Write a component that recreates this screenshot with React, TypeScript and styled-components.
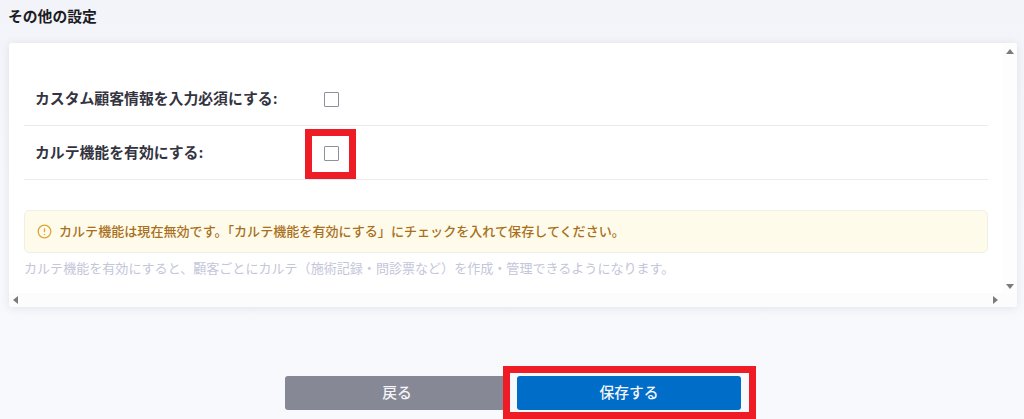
import React from "react";
import styled, { createGlobalStyle } from "styled-components";

const Global = createGlobalStyle`
  html, body { margin: 0; padding: 0; }
  body {
    width: 1024px; height: 419px; overflow: hidden;
    font-family: Inter, "Noto Sans CJK JP", sans-serif;
    background: linear-gradient(180deg, #f3f4f9 0%, #f7f8fc 45%, #f8f9fd 100%);
  }
`;
const Page = styled.div`
  position: relative; width: 1024px; height: 419px; overflow: hidden;
  display: flex; flex-direction: column;
`;
const Title = styled.h2`
  margin: 0; padding: 8px 8px 0; height: 43px; box-sizing: border-box;
  font-size: 14.8px; line-height: 18px; font-weight: 700; color: #1c1c24;
`;
const Card = styled.section`
  margin-left: 9px; width: 1008px; height: 264px; background: #fff; border-radius: 3px;
  box-shadow: 0 1px 10px rgba(70, 75, 110, 0.12);
  display: grid; grid-template-columns: 1fr 14px; grid-template-rows: 1fr 14px; overflow: hidden;
`;
const Content = styled.div`
  padding: 29px 15px 0; min-width: 0;
`;
const Row = styled.div`
  height: 54px; box-sizing: border-box; display: flex; align-items: center;
  border-bottom: 1px solid #ebecf2; padding: 0 0 0 11px;
`;
const Label = styled.label`
  width: 289px; font-size: 14.85px; font-weight: 700; color: #33343f; white-space: nowrap;
  margin-top: -2px;
`;
const Check = styled.span`
  width: 15px; height: 15px; margin-top: 2px; box-sizing: border-box;
  border: 1px solid #8d90a0; border-radius: 1px; background: #fff;
`;
const Alert = styled.div`
  margin-top: 30px; height: 43px; box-sizing: border-box; display: flex; align-items: center; gap: 7px;
  padding: 0 12px; background: #fffbeb; border: 1px solid #eef0e8; border-radius: 5px;
`;
const AlertText = styled.span`
  margin-top: -3px;
  color: #a8701c; font-size: 13.07px; font-weight: 500; white-space: nowrap;
`;
const Hint = styled.p`
  margin: 6px 0 0; font-size: 13.05px; line-height: 18px; color: #c4c6d9; white-space: nowrap;
`;
const VBar = styled.div`
  background: #fdfdfd; display: flex; flex-direction: column; justify-content: space-between; align-items: center;
  padding: 6px 0 4px 0;
`;
const HBar = styled.div`
  background: #fcfcfc; display: flex; justify-content: space-between; align-items: center; padding: 0 5px 0 4px;
`;
const Corner = styled.div`background: #fcfcfc;`;
const Arrow = styled.span<{ $dir: "up" | "down" | "left" | "right" }>`
  width: 0; height: 0; border-style: solid;
  ${({ $dir }) =>
    $dir === "up" ? "border-width: 0 4px 5px; border-color: transparent transparent #7b7b7b;" :
    $dir === "down" ? "border-width: 5px 4px 0; border-color: #7b7b7b transparent transparent;" :
    $dir === "left" ? "border-width: 4px 5px 4px 0; border-color: transparent #7b7b7b transparent transparent;" :
    "border-width: 4px 0 4px 5px; border-color: transparent transparent transparent #7b7b7b;"}
`;
const Actions = styled.div`
  margin-top: 69px; display: flex; justify-content: center; gap: 8px; margin-left: 2px;
`;
const Button = styled.button<{ $primary?: boolean }>`
  width: 224px; height: 34px; border: 0; border-radius: 3px; padding: 0 0 3px;
  background: ${({ $primary }) => ($primary ? "#006dc8" : "#868895")};
  color: #f4f5f8; font: 500 14.8px Inter, "Noto Sans CJK JP", sans-serif;
`;
const Frame = styled.div<{ $x: number; $y: number; $w: number; $h: number }>`
  position: absolute; box-sizing: border-box; border: 7px solid #ee1c25;
  left: ${p => p.$x}px; top: ${p => p.$y}px; width: ${p => p.$w}px; height: ${p => p.$h}px;
`;

export default function App() {
  return (
    <Page>
      <Global />
      <Title>その他の設定</Title>
      <Card>
        <Content>
          <Row><Label>カスタム顧客情報を入力必須にする:</Label><Check /></Row>
          <Row><Label>カルテ機能を有効にする:</Label><Check /></Row>
          <Alert>
            <svg width="15" height="15" viewBox="0 0 15 15" fill="none" stroke="#dca53a" strokeWidth="1.3">
              <circle cx="7.5" cy="7.5" r="6.3" />
              <path d="M7.5 4.2v4M7.5 10v1" />
            </svg>
            <AlertText>カルテ機能は現在無効です。「カルテ機能を有効にする」にチェックを入れて保存してください。</AlertText>
          </Alert>
          <Hint>カルテ機能を有効にすると、顧客ごとにカルテ（施術記録・問診票など）を作成・管理できるようになります。</Hint>
        </Content>
        <VBar><Arrow $dir="up" /><Arrow $dir="down" /></VBar>
        <HBar><Arrow $dir="left" /><Arrow $dir="right" /></HBar>
        <Corner />
      </Card>
      <Actions>
        <Button>戻る</Button>
        <Button $primary>保存する</Button>
      </Actions>
      <Frame $x={305} $y={129} $w={51} $h={50} />
      <Frame $x={503} $y={366} $w={253} $h={53} />
    </Page>
  );
}
